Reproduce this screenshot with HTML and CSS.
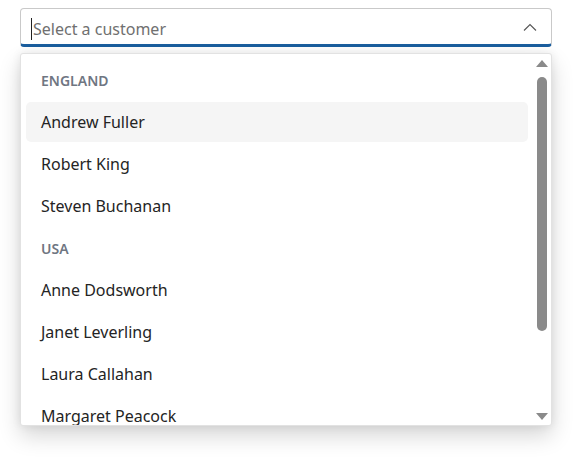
FILE: index.html
```html
<!doctype html>
<html lang="en">
  <head>
    <meta charset="UTF-8" />
    <meta name="viewport" content="width=device-width, initial-scale=1.0" />
    <title>Customer picker</title>
    <link rel="stylesheet" href="styles.css">
  </head>
  <body>
    <div class="combo">
      <div class="combo-input">
        <span class="caret"></span>
        <span class="placeholder">Select a customer</span>
        <svg class="chevron" width="14" height="8" viewBox="0 0 14 8" aria-hidden="true">
          <path d="M1 7.5 L7 1.5 L13 7.5" fill="none" stroke="#555" stroke-width="1.1" />
        </svg>
      </div>

      <div class="popup" role="listbox">
        <ul class="list">
          <li class="group">ENGLAND</li>
          <li class="item active">Andrew Fuller</li>
          <li class="item">Robert King</li>
          <li class="item">Steven Buchanan</li>
          <li class="group">USA</li>
          <li class="item">Anne Dodsworth</li>
          <li class="item">Janet Leverling</li>
          <li class="item">Laura Callahan</li>
          <li class="item">Margaret Peacock</li>
        </ul>
        <div class="scrollbar">
          <span class="arrow up"></span>
          <div class="track"><div class="thumb"></div></div>
          <span class="arrow down"></span>
        </div>
      </div>
    </div>
  </body>
</html>
```

FILE: styles.css
```css
:root {
  --fg: #242424;
  --muted: #707070;
  --border: #c9c9c9;
  --accent: #1b5e9e;
  --group: #6f7682;
}

* {
  box-sizing: border-box;
}

body {
  margin: 0;
  padding: 8px 25px 0 20px;
  min-height: 467px;
  background: #fff;
  font-family: 'Noto Sans', 'Open Sans', sans-serif;
  color: var(--fg);
}

.combo {
  width: 532px;
}

.combo-input {
  height: 39px;
  border: 1px solid var(--border);
  border-bottom: 3px solid var(--accent);
  border-radius: 4px;
  display: flex;
  align-items: center;
  padding: 4px 14px 0 10px;
  font-size: 16px;
}

.caret {
  width: 1px;
  height: 22px;
  background: #222;
  margin-right: 1px;
}

.placeholder {
  flex: 1;
  color: var(--muted);
}

.chevron {
  margin-bottom: 3px;
}

.popup {
  margin-top: 6px;
  height: 373px;
  border: 1px solid #e2e2e2;
  border-radius: 3px;
  background: #fff;
  box-shadow: 0 10px 22px rgba(0, 0, 0, 0.16), 0 0 10px rgba(0, 0, 0, 0.08);
  display: flex;
  overflow: hidden;
}

.list {
  list-style: none;
  margin: 0;
  padding: 6px 6px 0 5px;
  flex: 1;
  overflow: hidden;
  display: flex;
  flex-direction: column;
  gap: 2px;
}

.list li {
  flex: none;
  height: 40px;
  padding: 0 15px;
  display: flex;
  align-items: center;
  border-radius: 5px;
}

.group {
  font-size: 14px;
  font-weight: 600;
  color: var(--group);
}

.item {
  font-size: 16px;
}

.item.active {
  background: #f5f5f5;
}

.scrollbar {
  width: 17px;
  padding: 6px 3px 5px 2px;
  display: flex;
  flex-direction: column;
  align-items: center;
}

.arrow {
  width: 0;
  height: 0;
  border-left: 6px solid transparent;
  border-right: 6px solid transparent;
}

.arrow.up {
  border-bottom: 7px solid #8a8a8a;
}

.arrow.down {
  border-top: 7px solid #8a8a8a;
}

.track {
  flex: 1;
  width: 10px;
  padding: 10px 0 0;
}

.thumb {
  height: 254px;
  border-radius: 5px;
  background: #8a8a8a;
}
```
